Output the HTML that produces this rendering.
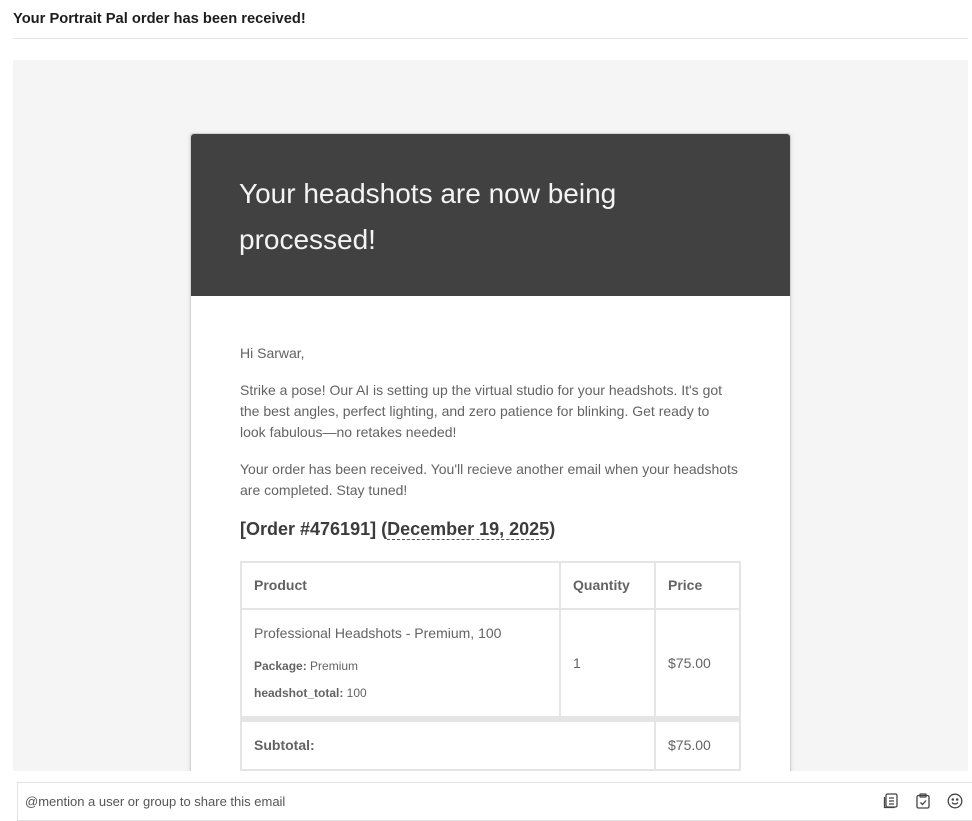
<!DOCTYPE html>
<html><head><meta charset="utf-8"><style>
*{margin:0;padding:0;box-sizing:border-box}
body{width:972px;height:821px;overflow:hidden;background:#fff;font-family:"Liberation Sans",sans-serif;position:relative}
.title{position:absolute;left:13px;top:11px;font-size:14.7px;font-weight:bold;color:#1d1d1d}
.hr{position:absolute;left:13px;top:38px;width:955px;height:1px;background:#e3e3e3}
.gray{position:absolute;left:13px;top:60px;width:955px;height:711px;background:#f5f5f5;overflow:hidden}
.card{position:absolute;left:177px;top:73px;width:601px;height:700px;background:#fff;border:1px solid #d3d3d3;border-radius:3px;box-shadow:0 1px 4px rgba(0,0,0,.12)}
.head{background:#414141;height:162px;padding:37px 48px 0;color:#f4f4f4;font-size:28px;line-height:46px;font-weight:300;border-radius:3px 3px 0 0}
.body{padding:47px 49px 0;color:#636363;font-size:14px;line-height:21px}
.body p{margin-bottom:16px;width:496px}
.body p.w{width:502px}
h2{font-size:18px;color:#3c3c3c;font-weight:bold;margin:-1px 0 19px;line-height:26px}
h2 u{text-decoration:none;border-bottom:1px dashed #555}
table{border-collapse:collapse;width:501px;color:#636363;font-size:14px}
td,th{border:2px solid #e5e5e5;text-align:left;vertical-align:top;padding:13px 12px}
th{font-weight:bold;height:47px;vertical-align:middle;padding:10px 12px}
.bar{position:absolute;left:17px;top:782px;width:955px;height:39px;border:1px solid #e3e3e3;border-right:none;font-size:13px;color:#555;padding:11px 7px}
.ic{position:absolute;top:793px}
</style></head><body>
<div class="title">Your Portrait Pal order has been received!</div>
<div class="hr"></div>
<div class="gray">
<div class="card">
<div class="head">Your headshots are now being<br>processed!</div>
<div class="body">
<p>Hi Sarwar,</p>
<p>Strike a pose! Our AI is setting up the virtual studio for your headshots. It's got the best angles, perfect lighting, and zero patience for blinking. Get ready to look fabulous—no retakes needed!</p>
<p class="w">Your order has been received. You'll recieve another email when your headshots are completed. Stay tuned!</p>
<h2>[Order #476191] (<u>December 19, 2025</u>)</h2>
<table>
<tr><th style="width:319px">Product</th><th style="width:95px">Quantity</th><th>Price</th></tr>
<tr><td style="padding-bottom:9px">Professional Headshots - Premium, 100<div style="font-size:12px;margin-top:9px;line-height:27px"><b>Package:</b> Premium<br><b>headshot_total:</b> 100</div></td><td style="vertical-align:middle">1</td><td style="vertical-align:middle">$75.00</td></tr>
<tr style="border-top:6px solid #e5e5e5;height:44px"><td colspan="2" style="vertical-align:middle"><b>Subtotal:</b></td><td style="vertical-align:middle">$75.00</td></tr>
<tr style="height:47px"><td colspan="2"></td><td></td></tr>
</table>
</div></div></div>
<div class="bar">@mention a user or group to share this email</div>
<svg class="ic" style="left:883px" width="16" height="16" viewBox="0 0 16 16" fill="none" stroke="#444" stroke-width="1.3"><rect x="3" y="1" width="11" height="13" rx="1.5"/><path d="M1.5 4v10.5h10"/><path d="M6 5h5M6 8h5M6 11h5"/></svg>
<svg class="ic" style="left:915px" width="16" height="16" viewBox="0 0 16 16" fill="none" stroke="#444" stroke-width="1.3"><rect x="2" y="2.5" width="12" height="12.5" rx="1.5"/><rect x="5" y="1" width="6" height="3" rx=".5"/><path d="M5.5 9.5l2 2 3.5-4"/></svg>
<svg class="ic" style="left:947px" width="16" height="16" viewBox="0 0 16 16" fill="none" stroke="#444" stroke-width="1.3"><circle cx="8" cy="8" r="6.8"/><circle cx="5.8" cy="6.5" r=".6" fill="#444"/><circle cx="10.2" cy="6.5" r=".6" fill="#444"/><path d="M5 9.5c1.5 2 4.5 2 6 0"/></svg>
</body></html>
